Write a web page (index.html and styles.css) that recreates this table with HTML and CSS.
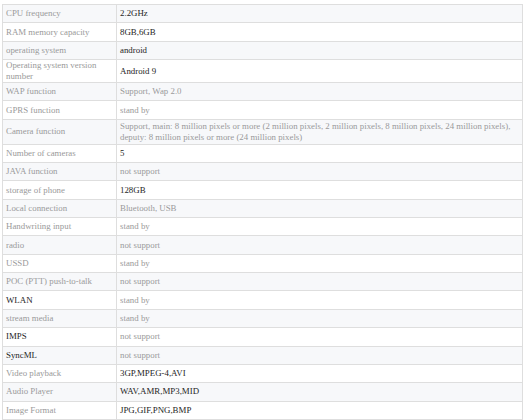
FILE: index.html
```html
<!DOCTYPE html>
<html lang="en">
<head>
    <meta charset="UTF-8">
    <meta name="viewport" content="width=device-width, initial-scale=1.0">
    <title>Specifications</title>
    <link rel="stylesheet" href="styles.css">
</head>
<body>
    <div class="specs">
        <table class="spec-table">
            <colgroup>
                <col class="col-name">
                <col>
            </colgroup>
            <tbody>
                <tr><td>CPU frequency</td><td class="dark">2.2GHz</td></tr>
                <tr><td>RAM memory capacity</td><td class="dark">8GB,6GB</td></tr>
                <tr><td>operating system</td><td class="dark">android</td></tr>
                <tr><td>Operating system version number</td><td class="dark">Android 9</td></tr>
                <tr><td>WAP function</td><td>Support, Wap 2.0</td></tr>
                <tr><td>GPRS function</td><td>stand by</td></tr>
                <tr class="tall"><td>Camera function</td><td>Support, main: 8 million pixels or more (2 million pixels, 2 million pixels, 8 million pixels, 24 million pixels), deputy: 8 million pixels or more (24 million pixels)</td></tr>
                <tr><td>Number of cameras</td><td class="dark">5</td></tr>
                <tr><td>JAVA function</td><td>not support</td></tr>
                <tr><td>storage of phone</td><td class="dark">128GB</td></tr>
                <tr><td>Local connection</td><td>Bluetooth, USB</td></tr>
                <tr><td>Handwriting input</td><td>stand by</td></tr>
                <tr><td>radio</td><td>not support</td></tr>
                <tr><td>USSD</td><td>stand by</td></tr>
                <tr><td>POC (PTT) push-to-talk</td><td>not support</td></tr>
                <tr><td class="dark">WLAN</td><td>stand by</td></tr>
                <tr><td>stream media</td><td>stand by</td></tr>
                <tr><td class="dark">IMPS</td><td>not support</td></tr>
                <tr><td class="dark">SyncML</td><td>not support</td></tr>
                <tr><td>Video playback</td><td class="dark">3GP,MPEG-4,AVI</td></tr>
                <tr><td>Audio Player</td><td class="dark">WAV,AMR,MP3,MID</td></tr>
                <tr><td>Image Format</td><td class="dark">JPG,GIF,PNG,BMP</td></tr>
            </tbody>
        </table>
    </div>
</body>
</html>
```

FILE: styles.css
```css
body {
    margin: 0;
    background: #fff;
    font-family: "Liberation Serif", "Times New Roman", serif;
}
.specs {
    padding: 4px 5px 0 2px;
}
.spec-table {
    width: 521px;
    border-collapse: collapse;
    table-layout: fixed;
    font-size: 8.85px;
    line-height: 11px;
}
.col-name {
    width: 114px;
}
.spec-table tr {
    height: 18.35px;
}
.spec-table tr.tall {
    height: 25px;
}
.spec-table td {
    padding: 0 3px;
    border: 1px solid #dedede;
    color: #9a9a9a;
    vertical-align: middle;
}
.spec-table tr:nth-child(odd) td {
    background: #f7f8fa;
}
.spec-table td.dark {
    color: #1e1e1e;
}
```
